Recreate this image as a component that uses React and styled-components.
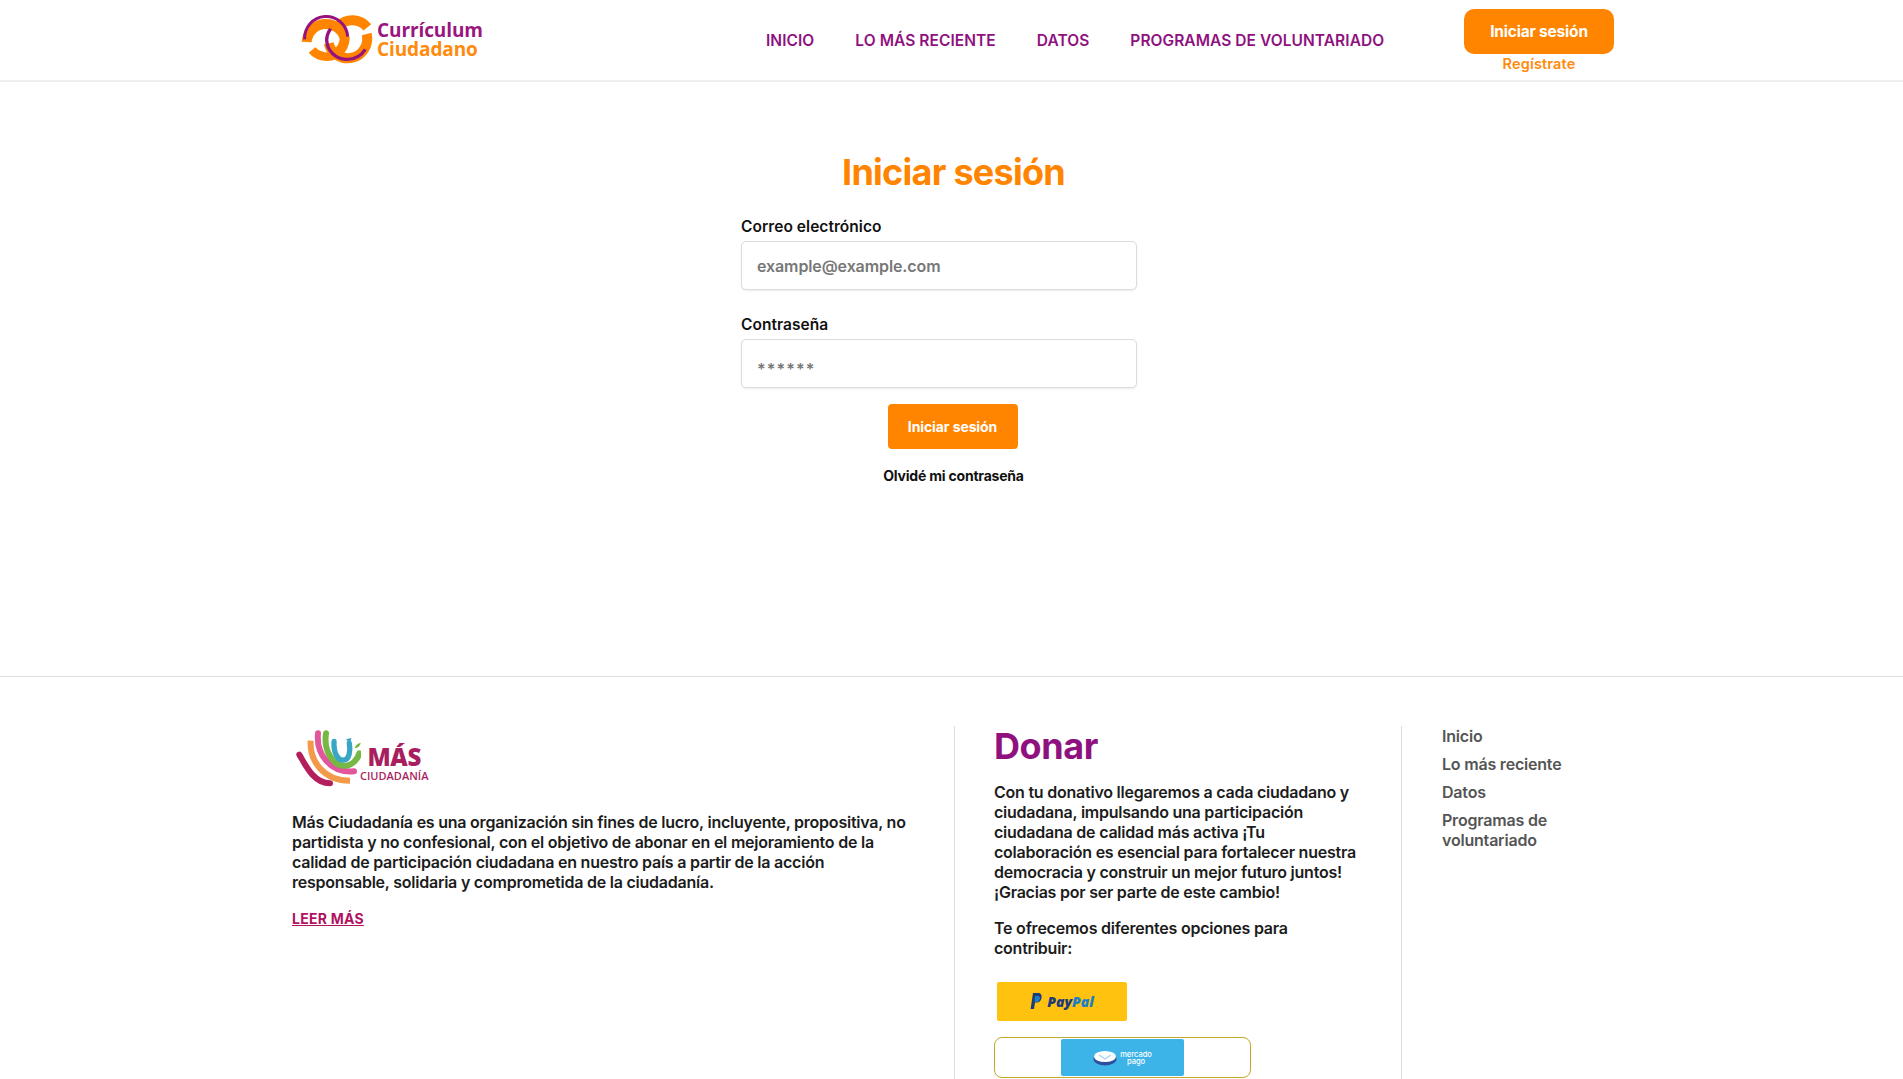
import React from "react";
import styled, { createGlobalStyle } from "styled-components";

const Global = createGlobalStyle`
    html, body {
        margin: 0;
        padding: 0;
        background: #fff;
        font-family: Inter, "Noto Sans", sans-serif;
        overflow: hidden;
    }
    * { box-sizing: border-box; }
`;

const Page = styled.div`
    height: 1079px;
    overflow: hidden;
    display: flex;
    flex-direction: column;
`;

const Header = styled.header`
    height: 82px;
    flex: none;
    border-bottom: 2px solid #eeeeee;
`;
const HeaderInner = styled.div`
    width: 1322px;
    height: 80px;
    margin-left: 292px;
    display: flex;
    align-items: flex-start;
`;
const Brand = styled.a`
    display: flex;
    align-items: center;
    gap: 1px;
    margin: 10px 0 0 4px;
    width: 470px;
`;
const BrandText = styled.div`
    margin-top: 5px;
    font-family: "Open Sans", sans-serif;
    font-size: 19px;
    line-height: 19px;
    font-weight: 700;
    letter-spacing: -0.1px;
    color: #9a1680;
`;
const BrandSecond = styled.div`
    color: #ff8a0c;
`;
const Nav = styled.nav`
    display: flex;
    gap: 41px;
    margin-top: 31px;
`;
const NavLink = styled.a`
    font-size: 15.5px;
    line-height: 19px;
    font-weight: 600;
    letter-spacing: 0.06px;
    color: #8f1180;
    white-space: nowrap;
`;
const Account = styled.div`
    margin-left: auto;
    margin-top: 9px;
    width: 150px;
    display: flex;
    flex-direction: column;
    align-items: center;
`;
const HeaderButton = styled.button`
    width: 150px;
    height: 45px;
    border: 0;
    border-radius: 10px;
    background: #ff8500;
    color: #fff;
    font-family: inherit;
    font-size: 15.5px;
    font-weight: 700;
    letter-spacing: -0.2px;
`;
const Register = styled.a`
    font-size: 14.5px;
    line-height: 19px;
    font-weight: 600;
    letter-spacing: 0.15px;
    color: #ff8a0c;
`;

const Main = styled.main`
    height: 595px;
    flex: none;
    border-bottom: 1px solid #dddddd;
    display: flex;
    flex-direction: column;
    align-items: center;
`;
const Title = styled.h1`
    margin: 68px 0 0;
    font-size: 36px;
    line-height: 44px;
    font-weight: 700;
    letter-spacing: -0.75px;
    color: #ff8500;
    transform: translateX(2px);
`;
const LoginForm = styled.form`
    width: 396px;
    margin: 23px 25px 0 0;
`;
const Field = styled.div`
    margin-bottom: 25px;
    &:last-child {
        margin-bottom: 0;
    }
`;
const Label = styled.label`
    display: block;
    font-size: 15.5px;
    line-height: 20px;
    font-weight: 600;
    letter-spacing: 0.05px;
    color: #111;
    margin-bottom: 4px;
`;
const Input = styled.input`
    display: block;
    width: 100%;
    height: 49px;
    padding: ${p => p.$stars ? "10px" : "0"} 15px 0;
    background: #fff;
    border: 1px solid #dcdcdc;
    border-radius: 5px;
    box-shadow: 0 1px 2px rgba(0, 0, 0, 0.08);
    font-family: inherit;
    font-size: 16px;
    font-weight: 600;
    letter-spacing: ${p => p.$stars ? "1.1px" : "-0.1px"};
    outline: none;
    &::placeholder {
        color: #777;
        opacity: 1;
    }
`;
const SubmitButton = styled.button`
    display: block;
    width: 130px;
    height: 45px;
    margin: 16px 0 0;
    border: 0;
    border-radius: 4px;
    background: #ff8500;
    color: #fff;
    font-family: inherit;
    font-size: 14px;
    font-weight: 700;
    letter-spacing: -0.1px;
    transform: translateX(1px);
`;
const Forgot = styled.a`
    margin-top: 17px;
    font-size: 14px;
    line-height: 20px;
    font-weight: 700;
    letter-spacing: -0.2px;
    color: #111;
    transform: translateX(2px);
`;

const Footer = styled.footer`
    width: 1320px;
    margin: 49px 0 0 292px;
    display: grid;
    grid-template-columns: 662px 448px 210px;
    flex: 1;
    min-height: 0;
`;
const AboutColumn = styled.section`
    padding-right: 40px;
`;
const FooterLogo = styled.div`
    display: flex;
    align-items: flex-start;
    height: 64px;
    margin: 3px 0 0 3px;
`;
const LogoWords = styled.div`
    margin: 16px 0 0 -1px;
    display: flex;
    flex-direction: column;
    align-items: center;
`;
const LogoBig = styled.span`
    font-family: "Open Sans", sans-serif;
    font-size: 24px;
    line-height: 24px;
    font-weight: 800;
    color: #a81f5f;
    letter-spacing: -0.3px;
`;
const LogoSmall = styled.span`
    font-family: "Open Sans", sans-serif;
    font-size: 11px;
    line-height: 13px;
    font-weight: 600;
    color: #a81f5f;
`;
const Body = styled.p`
    margin: ${p => p.$top || 0}px 0 0;
    font-size: 16px;
    line-height: 20px;
    font-weight: 600;
    letter-spacing: -0.23px;
    color: #1c1c1c;
`;
const ReadMore = styled.a`
    display: inline-block;
    margin-top: 18px;
    font-size: 14px;
    line-height: 18px;
    font-weight: 700;
    letter-spacing: 0.25px;
    color: #b0125f;
    text-decoration: underline;
`;
const DonateColumn = styled.section`
    border-left: 1px solid #dddddd;
    border-right: 1px solid #dddddd;
    padding: 0 40px 0 39px;
`;
const DonateTitle = styled.h2`
    margin: 2px 0 0;
    font-size: 36px;
    line-height: 36px;
    font-weight: 700;
    letter-spacing: -0.4px;
    color: #8f1180;
`;
const PayPalButton = styled.div`
    width: 130px;
    height: 39px;
    margin: 24px 0 0 3px;
    border-radius: 2px;
    background: #ffc20e;
    display: flex;
    align-items: center;
    justify-content: center;
    gap: 5px;
`;
const PayPalWord = styled.span`
    font-family: "Open Sans", sans-serif;
    font-style: italic;
    font-size: 14px;
    font-weight: 800;
    color: #1f3a7a;
`;
const PayPalAccent = styled.span`
    color: #1c7fc4;
`;
const MercadoFrame = styled.div`
    width: 257px;
    height: 41px;
    margin-top: 16px;
    border: 1px solid #c2a92a;
    border-radius: 8px;
    display: flex;
    justify-content: center;
    padding: 1px 0;
`;
const MercadoButton = styled.div`
    width: 123px;
    height: 37px;
    background: #3cb4e8;
    border-radius: 2px;
    display: flex;
    align-items: center;
    justify-content: center;
    gap: 3px;
`;
const MercadoWord = styled.span`
    font-size: 7.5px;
    line-height: 7px;
    font-weight: 500;
    color: #fff;
    text-align: center;
`;
const LinksColumn = styled.nav`
    padding-left: 40px;
    display: flex;
    flex-direction: column;
    gap: 8px;
`;
const FooterLink = styled.a`
    font-size: 16px;
    line-height: 20px;
    font-weight: 600;
    letter-spacing: -0.2px;
    color: #555;
`;

const RingsLogo = () => (
    <svg width="80" height="55" viewBox="0 0 240 165" fill="none">
        <path d="M48 120 A58 58 0 0 0 118 134" stroke="#ff8500" strokeWidth="26" />
        <path d="M128 48 A58 58 0 0 1 214 52" stroke="#ff8500" strokeWidth="30" />
        <path d="M32 96 A58 58 0 0 1 146 85 A58 58 0 0 1 128 125" stroke="#ff8500" strokeWidth="30" />
        <path d="M26 88 A64 64 0 0 1 155 80" stroke="#96137f" strokeWidth="9" />
        <path d="M212 72 A58 58 0 0 1 98 100" stroke="#ff8500" strokeWidth="30" />
        <path d="M208 118 A66 66 0 0 1 150 148 A60 60 0 0 1 92 90 A60 60 0 0 1 104 56" stroke="#96137f" strokeWidth="10" />
    </svg>
);

const HandsLogo = () => (
    <svg width="66" height="58" viewBox="45 45 198 174" fill="none" strokeLinecap="round">
        <path d="M58 122 C75 150 100 208 150 208" stroke="#b51e5c" strokeWidth="18" />
        <path d="M92 80 C88 140 130 200 210 200" stroke="#f29a4a" strokeWidth="18" strokeLinecap="butt" />
        <path d="M114 58 C108 120 150 178 222 172" stroke="#e2569c" strokeWidth="18" />
        <path d="M138 58 C130 110 160 158 195 155 C220 155 235 130 238 118" stroke="#77b743" strokeWidth="18" />
        <path d="M162 82 C160 120 175 140 190 138 C208 138 212 110 208 88" stroke="#3aa6c6" strokeWidth="16" />
        <path d="M198 76 L214 72 L210 90 Z" fill="#3aa6c6" />
        <path d="M224 102 C226 92 234 88 242 86 C240 96 234 102 224 102 Z" fill="#77b743" />
    </svg>
);

const PayPalMark = () => (
    <svg width="12" height="17" viewBox="0 0 12 17">
        <path d="M3 0 H8 C11 0 12 2 11.5 5 C11 8 9 9.5 6.5 9.5 H5 L4 16 H0.6 Z" fill="#1f3a7a" />
        <path d="M5 3 H8 C10 3 10.5 5 9.5 7 C9 8.5 7.5 9 6 9 L4.6 9 Z" fill="#1c7fc4" />
    </svg>
);

const HandshakeMark = () => (
    <svg width="24" height="16" viewBox="0 0 24 16">
        <ellipse cx="12" cy="9" rx="11.5" ry="6.5" fill="#2d4f9e" />
        <ellipse cx="12" cy="6.5" rx="11" ry="5.5" fill="#fff" />
        <path d="M6 5 L12 9 L18 5" stroke="#9fd3ee" strokeWidth="1.2" fill="none" />
    </svg>
);

const App = () => {
    return (<Page>
        <Global />
        <Header>
            <HeaderInner>
                <Brand>
                    <RingsLogo />
                    <BrandText>
                        Currículum
                        <BrandSecond>Ciudadano</BrandSecond>
                    </BrandText>
                </Brand>
                <Nav>
                    <NavLink>INICIO</NavLink>
                    <NavLink>LO MÁS RECIENTE</NavLink>
                    <NavLink>DATOS</NavLink>
                    <NavLink>PROGRAMAS DE VOLUNTARIADO</NavLink>
                </Nav>
                <Account>
                    <HeaderButton>Iniciar sesión</HeaderButton>
                    <Register>Regístrate</Register>
                </Account>
            </HeaderInner>
        </Header>
        <Main>
            <Title>Iniciar sesión</Title>
            <LoginForm>
                <Field>
                    <Label>Correo electrónico</Label>
                    <Input placeholder="example@example.com" readOnly />
                </Field>
                <Field>
                    <Label>Contraseña</Label>
                    <Input $stars placeholder="******" readOnly />
                </Field>
            </LoginForm>
            <SubmitButton>Iniciar sesión</SubmitButton>
            <Forgot>Olvidé mi contraseña</Forgot>
        </Main>
        <Footer>
            <AboutColumn>
                <FooterLogo>
                    <HandsLogo />
                    <LogoWords>
                        <LogoBig>MÁS</LogoBig>
                        <LogoSmall>CIUDADANÍA</LogoSmall>
                    </LogoWords>
                </FooterLogo>
                <Body $top={19}>
                    Más Ciudadanía es una organización sin fines de lucro, incluyente, propositiva, no
                    partidista y no confesional, con el objetivo de abonar en el mejoramiento de la
                    calidad de participación ciudadana en nuestro país a partir de la acción
                    responsable, solidaria y comprometida de la ciudadanía.
                </Body>
                <ReadMore>LEER MÁS</ReadMore>
            </AboutColumn>
            <DonateColumn>
                <DonateTitle>Donar</DonateTitle>
                <Body $top={18}>
                    Con tu donativo llegaremos a cada ciudadano y ciudadana, impulsando una participación
                    ciudadana de calidad más activa ¡Tu colaboración es esencial para fortalecer nuestra
                    democracia y construir un mejor futuro juntos! ¡Gracias por ser parte de este cambio!
                </Body>
                <Body $top={16}>Te ofrecemos diferentes opciones para contribuir:</Body>
                <PayPalButton>
                    <PayPalMark />
                    <PayPalWord>Pay<PayPalAccent>Pal</PayPalAccent></PayPalWord>
                </PayPalButton>
                <MercadoFrame>
                    <MercadoButton>
                        <HandshakeMark />
                        <MercadoWord>mercado<br />pago</MercadoWord>
                    </MercadoButton>
                </MercadoFrame>
            </DonateColumn>
            <LinksColumn>
                <FooterLink>Inicio</FooterLink>
                <FooterLink>Lo más reciente</FooterLink>
                <FooterLink>Datos</FooterLink>
                <FooterLink>Programas de<br />voluntariado</FooterLink>
            </LinksColumn>
        </Footer>
    </Page>);
};

export default App;
